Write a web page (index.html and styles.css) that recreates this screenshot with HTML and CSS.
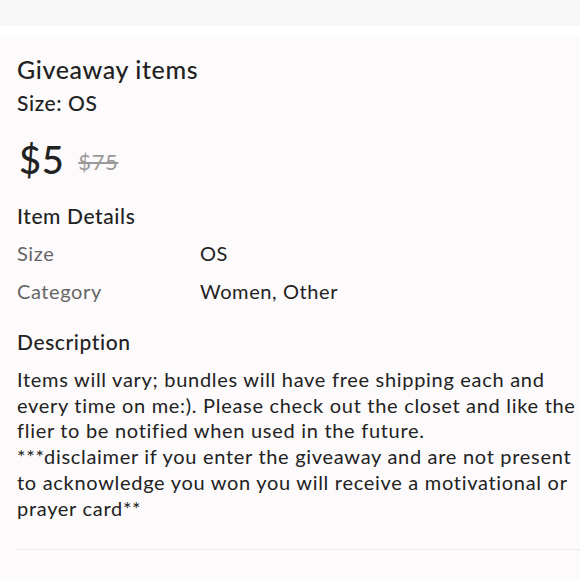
FILE: index.html
```html
<!DOCTYPE html>
<html>
<head>
<meta charset="utf-8">
<link rel="stylesheet" href="styles.css">
</head>
<body>
<div class="topbar"></div>
<div class="gap"></div>
<main class="listing">
  <h1 class="title">Giveaway items</h1>
  <div class="size">Size: OS</div>
  <div class="price">
    <span class="now">$5</span>
    <span class="was">$75</span>
  </div>
  <h2 class="section">Item Details</h2>
  <div class="details">
    <div class="label">Size</div><div class="value">OS</div>
    <div class="label">Category</div><div class="value">Women, Other</div>
  </div>
  <h2 class="section desc-head">Description</h2>
  <p class="desc">Items will vary; bundles will have free shipping each and<br>every time on me:). Please check out the closet and like the<br>flier to be notified when used in the future.<br>***disclaimer if you enter the giveaway and are not present<br>to acknowledge you won you will receive a motivational or<br>prayer card**</p>
  <hr class="divider">
</main>
</body>
</html>
```
FILE: styles.css
```css
html, body {
  margin: 0;
  padding: 0;
  background: #fcfafb;
  font-family: Lato, "Noto Sans", sans-serif;
  color: #222;
  overflow: hidden;
  letter-spacing: 0.6px;
}
.topbar {
  height: 26px;
  background: #f8f8f8;
}
.gap {
  height: 11px;
  background: #fff;
}
.listing {
  padding: 0 0 0 17px;
}
.title {
  margin: 17px 0 0;
  font-size: 25px;
  font-weight: 500;
  line-height: 30px;
}
.size {
  margin-top: 6px;
  font-size: 21px;
  font-weight: 500;
  line-height: 26px;
}
.price {
  margin-top: 20px;
  display: flex;
  align-items: center;
  gap: 14px;
  padding-left: 2px;
}
.now {
  font-size: 38px;
  font-weight: 500;
  line-height: 46px;
}
.was {
  font-size: 22px;
  color: #999;
  text-decoration: line-through;
  padding-top: 4px;
}
.section {
  margin: 20px 0 0;
  font-size: 21px;
  font-weight: 500;
  line-height: 28px;
}
.details {
  display: grid;
  grid-template-columns: 183px 1fr;
  row-gap: 12px;
  margin-top: 10px;
  font-size: 20px;
  line-height: 26px;
}
.label { color: #666; }
.value { color: #222; }
.desc-head { margin-top: 24px; }
.desc {
  margin: 11px 0 0;
  font-size: 20px;
  line-height: 25.7px;
  letter-spacing: 0.7px;
  white-space: nowrap;
}
.divider {
  margin: 28px 0 0;
  border: none;
  border-top: 1px solid #ececec;
}
```
